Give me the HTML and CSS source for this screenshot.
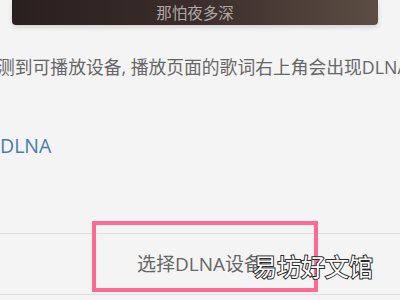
FILE: index.html
```html
<!DOCTYPE html>
<html lang="zh-CN">
<head>
  <meta charset="UTF-8" />
  <title>DLNA</title>
  <link rel="stylesheet" href="styles.css">
</head>
<body>
  <div class="lyric-card">
    <span class="lyric-line">那怕夜多深</span>
  </div>

  <p class="tip">测到可播放设备, 播放页面的歌词右上角会出现DLNA</p>

  <a class="dlna-link">DLNA</a>

  <div class="sheet">
    <div class="sheet-item">选择DLNA设备</div>
    <div class="highlight"></div>
    <div class="watermark">易坊好文馆</div>
  </div>
</body>
</html>
```

FILE: styles.css
```css
body {
  margin: 0;
  background-color: #f4f4f4;
  font-family: "Open Sans", "Noto Sans CJK SC", sans-serif;
  width: 400px;
  height: 300px;
  overflow: hidden;
}
.lyric-card {
  margin: 0 22px 0 12px;
  height: 25px;
  border-radius: 0 0 4px 4px;
  background: linear-gradient(90deg, #2a1f1f 0%, #3a2d2b 50%, #5c4e44 100%);
  box-shadow: 0 2px 5px rgba(0, 0, 0, 0.15);
  text-align: center;
}
.lyric-line {
  display: block;
  color: #b0a8a5;
  font-size: 15.5px;
  line-height: 26px;
}
.tip {
  margin: 32px 0 0 -3px;
  font-size: 17.8px;
  line-height: 20px;
  color: #666;
  white-space: nowrap;
}
.dlna-link {
  display: block;
  margin-top: 59px;
  font-size: 19.5px;
  line-height: 20px;
  color: #4a7bb0;
}
.sheet {
  position: relative;
  margin-top: 77px;
  border-top: 1px solid #dcdcdc;
  border-bottom: 1px solid #dcdcdc;
}
.sheet-item {
  height: 60px;
  line-height: 60px;
  text-align: center;
  font-size: 19px;
  color: #666;
}
.highlight {
  position: absolute;
  left: 92px;
  top: -13px;
  width: 218px;
  height: 63px;
  border: 4.5px solid #ff6a95;
}
.watermark {
  position: absolute;
  left: 253px;
  top: 18px;
  font-family: "Noto Sans CJK SC", sans-serif;
  font-size: 24px;
  line-height: 28px;
  color: #fff;
  -webkit-text-stroke: 2px #2a2a2a;
  paint-order: stroke fill;
}
```
